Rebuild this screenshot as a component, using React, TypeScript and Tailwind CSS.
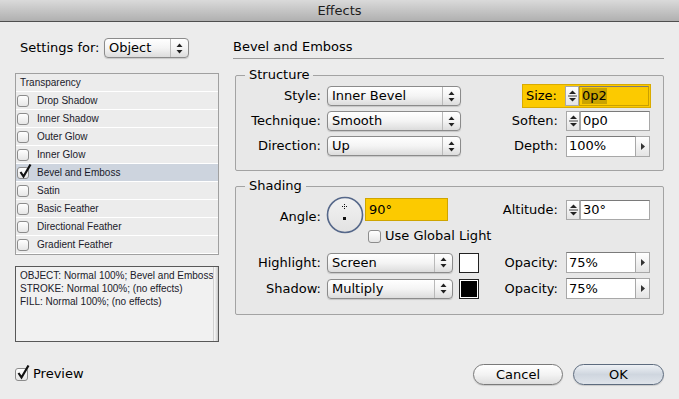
import type { ReactNode } from "react";

const effects = [
  { name: "Drop Shadow", on: false },
  { name: "Inner Shadow", on: false },
  { name: "Outer Glow", on: false },
  { name: "Inner Glow", on: false },
  { name: "Bevel and Emboss", on: true },
  { name: "Satin", on: false },
  { name: "Basic Feather", on: false },
  { name: "Directional Feather", on: false },
  { name: "Gradient Feather", on: false },
];

function Arrows() {
  return (
    <svg width="7" height="11" viewBox="0 0 7 11">
      <path d="M3.5 0.5 L6.5 4 L0.5 4 Z" fill="#222" />
      <path d="M3.5 10.5 L6.5 7 L0.5 7 Z" fill="#222" />
    </svg>
  );
}

function Popup({ label, w }: { label: string; w: string }) {
  return (
    <div
      className={`flex h-[20px] ${w} rounded-[4px] border border-[#8b8b8b] bg-linear-to-b from-white via-[#f4f4f4] to-[#dcdcdc] shadow-[0_1px_1px_rgba(0,0,0,0.15)]`}
    >
      <span className="flex-1 pl-[4px] text-[13px] leading-[18px]">{label}</span>
      <span className="flex w-[18px] items-center justify-center border-l border-[#b9b9b9]">
        <Arrows />
      </span>
    </div>
  );
}

function SpinIcon() {
  return (
    <svg width="9" height="14" viewBox="0 0 9 14">
      <path d="M4.5 1.5 L8 5 L1 5 Z" fill="#222" />
      <rect x="0" y="6.5" width="9" height="1" fill="#444" />
      <path d="M4.5 12.5 L8 9 L1 9 Z" fill="#222" />
    </svg>
  );
}

function SpinField({ value, yellow }: { value: string; yellow?: boolean }) {
  return (
    <div className="flex h-[20px] w-[84px]">
      <div className="flex w-[14px] items-center justify-center border border-[#a8a8a8] bg-linear-to-b from-white to-[#e4e4e4]">
        <SpinIcon />
      </div>
      <div
        className={`flex flex-1 items-center border border-[#a8a8a8] border-t-[#7a7a7a] pl-[2px] text-[13px] ${
          yellow ? "bg-[#fcca00] border-[#c9a000]" : "bg-white"
        }`}
      >
        <span className={yellow ? "bg-[#c9a300] leading-[16px]" : "leading-[16px]"}>{value}</span>
      </div>
    </div>
  );
}

function ArrowField({ value }: { value: string }) {
  return (
    <div className="flex h-[21px] w-[84px]">
      <div className="flex flex-1 items-center border border-[#a8a8a8] border-t-[#7a7a7a] bg-white pl-[2px] text-[13px]">
        {value}
      </div>
      <div className="flex w-[14px] items-center justify-center border border-l-0 border-[#a8a8a8] bg-linear-to-b from-white to-[#e4e4e4]">
        <svg width="4" height="7" viewBox="0 0 4 7">
          <path d="M0 0 L4 3.5 L0 7 Z" fill="#333" />
        </svg>
      </div>
    </div>
  );
}

function Box({ checked, big }: { checked?: boolean; big?: boolean }) {
  return (
    <span
      className={`relative inline-block shrink-0 rounded-[3px] border border-[#8c8c8c] bg-linear-to-b from-white to-[#e6e6e6] ${
        big ? "h-[13px] w-[13px]" : "h-[12px] w-[12px]"
      }`}
    >
      {checked && (
        <svg className="absolute left-[0px] top-[-4px]" width="15" height="15" viewBox="0 0 15 15">
          <path d="M2.5 8 L5.5 12.5 L12.5 0.5" fill="none" stroke="#111" strokeWidth="2.2" />
        </svg>
      )}
    </span>
  );
}

function Group({ title, children, cls }: { title: string; children: ReactNode; cls: string }) {
  return (
    <fieldset className={`ml-[2px] rounded-[2px] border border-[#a3a3a3] bg-[#e8e8e8] pl-[8px] pr-[13px] ${cls}`}>
      <legend className="ml-[1px] px-[4px] text-[13px] leading-[16px]">{title}</legend>
      {children}
    </fieldset>
  );
}

function Label({ children }: { children: ReactNode }) {
  return <span className="inline-block w-[77px] shrink-0 text-right text-[13px] leading-[16px]">{children}</span>;
}

function RightLabel({ children }: { children: ReactNode }) {
  return <span className="mr-[8px] text-[13px] leading-[16px]">{children}</span>;
}

function Dial() {
  return (
    <svg width="38" height="38" viewBox="0 0 38 38" className="shrink-0">
      <defs>
        <linearGradient id="dial" x1="0" y1="0" x2="0" y2="1">
          <stop offset="0" stopColor="#f2f2f2" />
          <stop offset="1" stopColor="#e2e2e2" />
        </linearGradient>
      </defs>
      <circle cx="19" cy="19" r="17.5" fill="url(#dial)" stroke="#56688a" strokeWidth="1.6" />
      <rect x="18" y="8" width="1" height="1" fill="#111" />
      <rect x="18" y="12" width="1" height="1" fill="#111" />
      <rect x="16" y="10" width="1" height="1" fill="#111" />
      <rect x="20" y="10" width="1" height="1" fill="#111" />
      <rect x="18" y="10" width="1" height="1" fill="#111" />
      <rect x="17" y="21" width="3" height="3" fill="#111" />
    </svg>
  );
}

export default function App() {
  return (
    <div className="flex h-[399px] w-[679px] flex-col overflow-hidden bg-[#ececec] font-['DejaVu_Sans',sans-serif] text-black">
      {/* title bar */}
      <div className="flex h-[22px] shrink-0 items-center justify-center border-b border-[#4f4f4f] bg-linear-to-b from-[#dadada] to-[#b0b0b0] text-[13px] text-[#1d1d1d]">
        Effects
      </div>

      <div className="flex flex-1">
        {/* left column */}
        <div className="ml-[15px] flex w-[204px] flex-col">
          <div className="mt-[16px] flex h-[20px] items-center">
            <span className="w-[89px] pl-[5px] text-[13px]">Settings for:</span>
            <Popup label="Object" w="w-[85px]" />
          </div>

          <div className="mt-[15px] border border-[#a0a0a0] bg-[#ececec] font-['Liberation_Sans',sans-serif]">
            <div className="flex h-[18px] items-center border-b border-white pl-[4px] text-[10px] text-[#1a1a2a]">
              Transparency
            </div>
            {effects.map((e) => (
              <div
                key={e.name}
                className={`flex h-[18px] items-center gap-[8px] border-b border-white pl-[1px] text-[10px] text-[#1a1a2a] ${
                  e.on ? "bg-[#cdd4de]" : ""
                }`}
              >
                <Box checked={e.on} />
                <span>{e.name}</span>
              </div>
            ))}
          </div>

          <div className="mt-[11px] flex h-[76px] border border-[#585858] bg-[#f1f1f1] font-['Liberation_Sans',sans-serif]">
            <div className="flex-1 whitespace-nowrap pl-[4px] pt-[2px] text-[10px] leading-[13px] text-[#1a1a2a]">
              <div>OBJECT: Normal 100%; Bevel and Emboss</div>
              <div>STROKE: Normal 100%; (no effects)</div>
              <div>FILL: Normal 100%; (no effects)</div>
            </div>
            <div className="w-[15px] border-l border-[#d0d0d0] bg-linear-to-r from-[#fafafa] via-[#e4e4e4] to-[#c8c8c8]" />
          </div>
        </div>

        {/* right column */}
        <div className="ml-[14px] flex w-[431px] flex-col">
          <div className="mt-[17px] border-b border-[#9a9a9a] pb-[3px] text-[13px] leading-[16px]">
            Bevel and Emboss
          </div>

          <Group title="Structure" cls="mt-[8px] pb-[14px] pt-[3px]">
            <div className="flex flex-col gap-[5px]">
              <div className="flex h-[20px] items-center">
                <Label>Style:</Label>
                <span className="ml-[6px]">
                  <Popup label="Inner Bevel" w="w-[134px]" />
                </span>
                <span className="flex-1" />
                <div className="-mr-[1px] flex w-[129px] items-center justify-end border border-[#d9ab00] bg-[#fcca00] py-[1px] pr-[1px]">
                  <RightLabel>Size:</RightLabel>
                  <SpinField value="0p2" yellow />
                </div>
              </div>
              <div className="flex h-[20px] items-center">
                <Label>Technique:</Label>
                <span className="ml-[6px]">
                  <Popup label="Smooth" w="w-[134px]" />
                </span>
                <span className="flex-1" />
                <RightLabel>Soften:</RightLabel>
                <SpinField value="0p0" />
              </div>
              <div className="flex h-[20px] items-center">
                <Label>Direction:</Label>
                <span className="ml-[6px]">
                  <Popup label="Up" w="w-[134px]" />
                </span>
                <span className="flex-1" />
                <RightLabel>Depth:</RightLabel>
                <ArrowField value="100%" />
              </div>
            </div>
          </Group>

          <Group title="Shading" cls="mt-[7px] pb-[15px] pt-[2px]">
            <div className="flex items-start">
              <div className="mt-[8px]">
                <Label>Angle:</Label>
              </div>
              <span className="ml-[5px]">
                <Dial />
              </span>
              <div className="ml-[1px] mt-[2px] flex flex-col">
                <div className="flex h-[23px] w-[83px] items-center border border-[#cfa500] bg-[#fcca00] pl-[3px] text-[13px]">
                  90°
                </div>
                <div className="ml-[3px] mt-[7px] flex items-center gap-[4px] text-[13px] leading-[16px]">
                  <Box big />
                  <span>Use Global Light</span>
                </div>
              </div>
              <span className="flex-1" />
              <div className="mt-[4px] flex items-center">
                <RightLabel>Altitude:</RightLabel>
                <SpinField value="30°" />
              </div>
            </div>

            <div className="mt-[8px] flex flex-col gap-[5px]">
              <div className="flex h-[21px] items-center">
                <Label>Highlight:</Label>
                <span className="ml-[6px]">
                  <Popup label="Screen" w="w-[126px]" />
                </span>
                <span className="ml-[6px] h-[20px] w-[20px] border border-[#222] bg-white" />
                <span className="flex-1" />
                <RightLabel>Opacity:</RightLabel>
                <ArrowField value="75%" />
              </div>
              <div className="flex h-[21px] items-center">
                <Label>Shadow:</Label>
                <span className="ml-[6px]">
                  <Popup label="Multiply" w="w-[126px]" />
                </span>
                <span className="ml-[6px] h-[20px] w-[20px] border border-[#222] bg-black shadow-[inset_0_0_0_1px_#fff]" />
                <span className="flex-1" />
                <RightLabel>Opacity:</RightLabel>
                <ArrowField value="75%" />
              </div>
            </div>
          </Group>
        </div>
      </div>

      {/* footer */}
      <div className="mb-[15px] flex h-[20px] items-center px-[15px]">
        <div className="flex items-center gap-[5px] text-[13px]">
          <Box checked big />
          <span>Preview</span>
        </div>
        <span className="flex-1" />
        <button className="h-[21px] w-[90px] rounded-full border border-[#7a7a7a] bg-linear-to-b from-white via-[#f3f3f3] to-[#dedede] text-[13px] shadow-[0_1px_1px_rgba(0,0,0,0.15)]">
          Cancel
        </button>
        <button className="ml-[10px] h-[21px] w-[91px] rounded-full border border-[#5d6b7e] bg-linear-to-b from-[#eef1f5] via-[#cfd6df] to-[#dfe4ea] text-[13px] shadow-[0_1px_1px_rgba(0,0,0,0.15)]">
          OK
        </button>
      </div>
    </div>
  );
}
